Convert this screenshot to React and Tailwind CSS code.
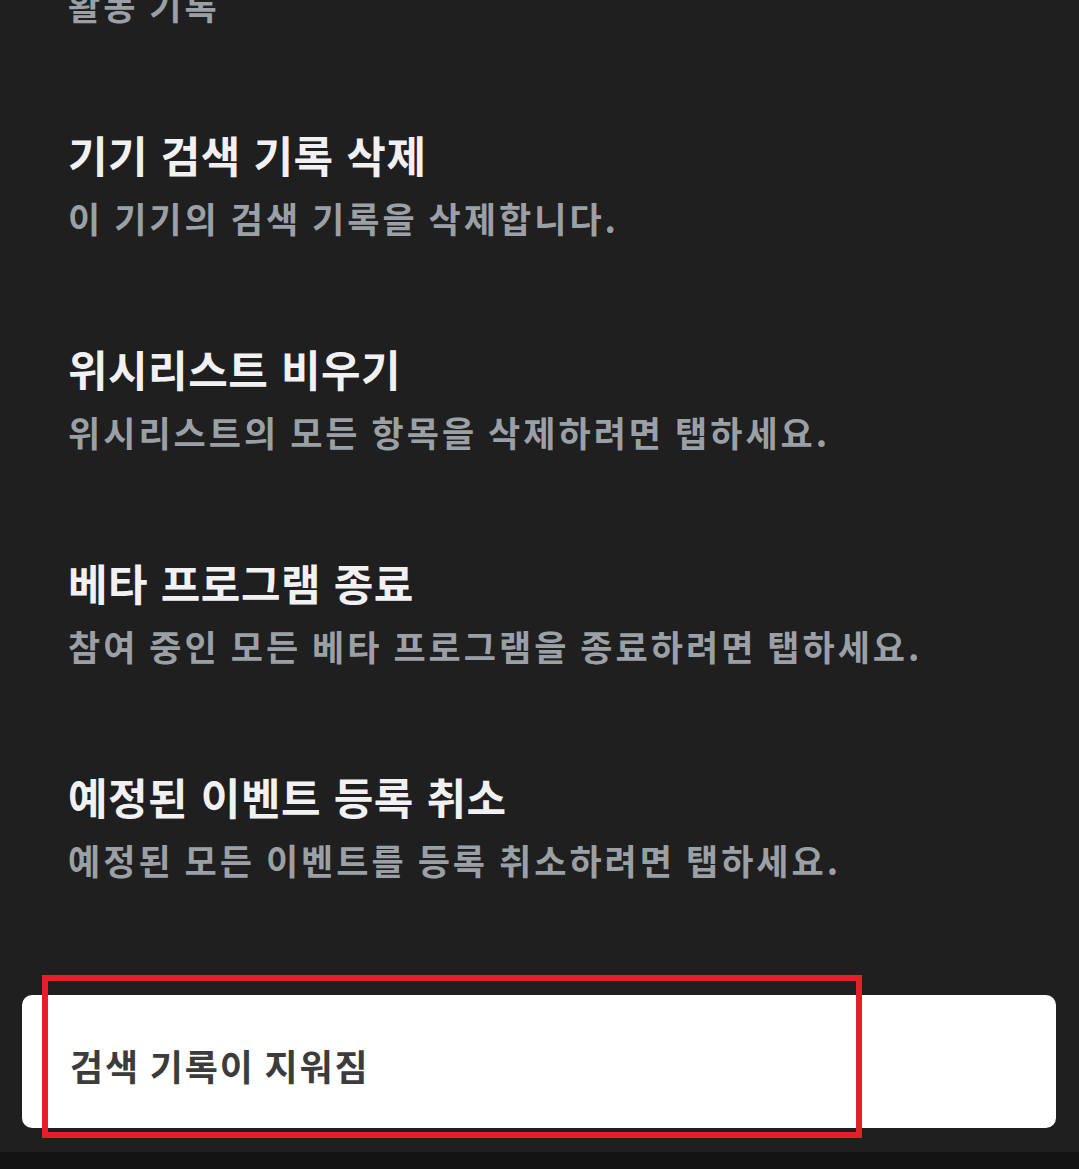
const items = [
  { title: '기기 검색 기록 삭제', desc: '이 기기의 검색 기록을 삭제합니다.' },
  { title: '위시리스트 비우기', desc: '위시리스트의 모든 항목을 삭제하려면 탭하세요.' },
  { title: '베타 프로그램 종료', desc: '참여 중인 모든 베타 프로그램을 종료하려면 탭하세요.' },
  { title: '예정된 이벤트 등록 취소', desc: '예정된 모든 이벤트를 등록 취소하려면 탭하세요.' },
]

export default function App() {
  return (
    <div
      className="relative flex h-[1169px] w-[1079px] flex-col overflow-hidden bg-[#1f1f1f]"
      style={{ fontFamily: '"Noto Sans CJK KR", "Noto Sans", sans-serif' }}
    >
      <div className="flex-1 px-[68px]">
        {/* 섹션 헤더 */}
        <div className="mt-[-27px] text-[35px] font-bold leading-[64px] tracking-[3px] text-[#9aa0a6]">활동 기록</div>

        <div className="mt-[85px] flex flex-col gap-[86px]">
          {items.map((item) => (
            <div key={item.title}>
              <div className="text-[43px] font-bold leading-[64px] tracking-[0.5px] [word-spacing:2.4px] text-[#f1f1f3]">
                {item.title}
              </div>
              <div className="text-[35px] font-bold leading-[64px] tracking-[3px] text-[#9aa0a6]">{item.desc}</div>
            </div>
          ))}
        </div>
      </div>

      {/* 하단 내비게이션 바 */}
      <div className="h-[17px] bg-[#131313]" />

      {/* 토스트 */}
      <div className="absolute left-[22px] right-[23px] top-[995px] flex h-[133px] items-center rounded-[10px] bg-white px-[48px] pt-[6px]">
        <span className="text-[36px] font-bold tracking-[1.8px] text-[#3c3c3c]">검색 기록이 지워짐</span>
      </div>

      {/* 강조 표시 */}
      <div className="absolute left-[42px] top-[975px] h-[163px] w-[820px] border-[6px] border-[#e61e2a]" />
    </div>
  )
}
